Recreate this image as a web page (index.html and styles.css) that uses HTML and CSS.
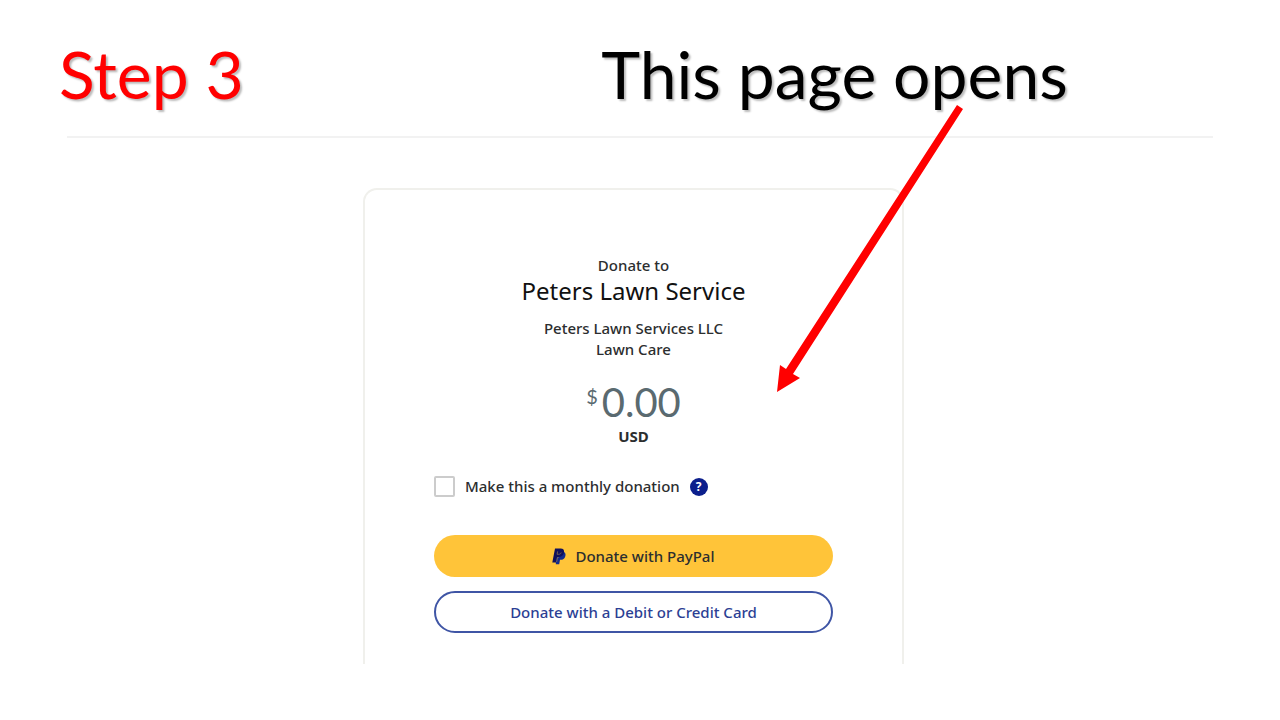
FILE: index.html
```
<!DOCTYPE html>
<html lang="en">

<head>
	<meta charset="UTF-8">
	<meta name="viewport" content="width=device-width, initial-scale=1.0">
	<title>Step 3</title>
	<link rel="stylesheet" href="styles.css">
</head>

<body>
	<header class="heading">
		<h1 class="step">Step 3</h1>
		<p class="caption">This page opens</p>
	</header>
	<hr class="rule">

	<main class="stage">
		<form class="card">
			<p class="small">Donate to</p>
			<h2 class="name">Peters Lawn Service</h2>
			<p class="small">Peters Lawn Services LLC</p>
			<p class="small">Lawn Care</p>
			<p class="amount"><span class="sign">$</span>0.00</p>
			<p class="currency">USD</p>

			<div class="monthly">
				<input id="monthly" class="check" type="checkbox">
				<label for="monthly">Make this a monthly donation</label>
				<button class="help" type="button" aria-label="Help">?</button>
			</div>

			<button class="btn paypal" type="button">
				<svg class="logo" viewBox="0 0 14 17" aria-hidden="true">
					<path fill="#142c8e" d="M4.600 4H12C13.500 5 13.900 6.500 13.300 8.200C12.600 10.800 10.900 11.800 8.500 11.800H8L7.200 16.300H3.800Z" />
					<path fill="#10105c" d="M3 .5H8.600C11.300 .5 12.500 2.100 12 4.600C11.400 7.600 9.500 9 6.500 9H5L4 14.500H.3Z" />
					<path fill="none" stroke="#b08f4d" stroke-width=".6" d="M6.700 9.500H5.500L4.600 14M5.600 3.400L5.100 6.300H6.500C8 6.300 9 5.500 9.200 4.500" />
				</svg>
				Donate with PayPal
			</button>
			<button class="btn debit" type="button">Donate with a Debit or Credit Card</button>
		</form>

		<svg class="arrow" viewBox="0 0 188 288" aria-hidden="true">
			<path fill="#f00" d="M181 0L187 4L17 269L24 273L1 287L4 260L10 264Z" />
		</svg>
	</main>
</body>

</html>
```
FILE: styles.css
```
* {
	box-sizing: border-box;
	margin: 0;
	padding: 0;
}

body {
	min-height: 100vh;
	overflow-x: hidden;
	background: #fff;
	color: #2c2e2f;
	font: 500 15px/21px "Noto Sans", sans-serif;
}

.heading {
	display: grid;
	grid-template-columns: 44% 1fr;
	gap: 5px;
	padding: 34px 0 22px 59px;
	font: 66px/80px Lato, sans-serif;
	color: #000;
	text-shadow: 2px 2px 2px #0004;
}

.step {
	color: #f00;
	font: inherit;
}

.rule {
	margin: 0 67px;
	border: 0;
	border-top: 2px solid #f2f2f2;
}

.stage {
	position: relative;
	display: flex;
	justify-content: center;
	padding: 50px 13px 56px 0;
}

.card {
	display: flex;
	flex-direction: column;
	width: min(100%, 541px);
	padding: 65px 69px 31px;
	border: 2px solid #f0f0ec;
	border-bottom: 0;
	border-radius: 14px 14px 0 0;
	text-align: center;
}

.name {
	margin-bottom: 12px;
	color: #111;
	font-size: 24px;
	font-weight: 400;
	line-height: 30px;
}

.amount {
	display: flex;
	justify-content: center;
	gap: 4px;
	margin-top: 20px;
	color: #5a6a70;
	font: 40px/44px Lato, sans-serif;
}

.sign {
	font-size: 20px;
	line-height: 32px;
}

.currency {
	margin-top: 2px;
	font-weight: 700;
}

.monthly {
	display: flex;
	align-items: center;
	gap: 10px;
	margin: 29px 0 38px;
}

.check {
	appearance: none;
	width: 21px;
	height: 21px;
	border: 2px solid #ccc;
	border-radius: 2px;
}

.help {
	width: 18px;
	height: 18px;
	border: 0;
	border-radius: 50%;
	background: #0c1f8c;
	color: #fff;
	font: 700 12px/18px "Noto Sans", sans-serif;
}

.btn {
	display: flex;
	align-items: center;
	justify-content: center;
	gap: 9px;
	height: 42px;
	border: 0;
	border-radius: 21px;
	font: inherit;
}

.paypal {
	margin-bottom: 14px;
	background: #ffc439;
	color: #2c2e2f;
}

.debit {
	border: 2px solid #3f55a5;
	background: #fff;
	color: #2c3f94;
}

.logo {
	width: 14px;
	height: 17px;
}

/* runs from the caption down into the card */
.arrow {
	position: absolute;
	top: -33px;
	left: calc(50% + 136px);
	width: 188px;
	height: 288px;
	overflow: visible;
}
```
